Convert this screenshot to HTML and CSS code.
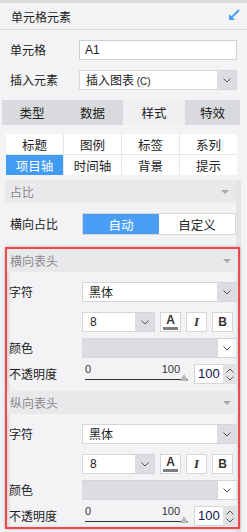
FILE: index.html
```html
<!DOCTYPE html>
<html lang="zh-CN">

<head>
  <meta charset="UTF-8">
  <meta name="viewport" content="width=device-width, initial-scale=1.0">
  <title>单元格元素</title>
  <link rel="stylesheet" href="styles.css">
</head>

<body>
  <div class="panel">
    <div class="topbar"></div>
    <div class="title">
      <span>单元格元素</span>
      <svg class="collapse" width="12" height="12" viewBox="0 0 12 12">
        <line x1="11" y1="1" x2="3" y2="9" stroke="#4a9ff5" stroke-width="2" />
        <polygon points="1,5 1,11 7,11" fill="#4a9ff5" />
      </svg>
    </div>

    <div class="form-top">
      <div class="row">
        <span class="label">单元格</span>
        <div class="field">A1</div>
      </div>
      <div class="row">
        <span class="label">插入元素</span>
        <div class="select">
          <span class="value">插入图表 <small>(C)</small></span>
          <span class="caret">
            <svg width="8" height="5" viewBox="0 0 8 5"><polyline points="0.5,0.5 4,4 7.5,0.5" fill="none" stroke="#555" /></svg>
          </span>
        </div>
      </div>
    </div>

    <div class="tabs">
      <div class="tab t1">类型</div>
      <div class="tab t2">数据</div>
      <div class="tab t3 active">样式</div>
      <div class="tab t4">特效</div>
    </div>

    <div class="subtabs">
      <div class="sub">标题</div>
      <div class="sub">图例</div>
      <div class="sub">标签</div>
      <div class="sub">系列</div>
      <div class="sub active">项目轴</div>
      <div class="sub">时间轴</div>
      <div class="sub">背景</div>
      <div class="sub">提示</div>
    </div>

    <div class="scroll">
      <div class="section">
        <div class="sec-head"><span>占比</span><i class="tri"></i></div>
        <div class="row gap-top">
          <span class="label">横向占比</span>
          <div class="toggle">
            <span class="opt on">自动</span>
            <span class="opt">自定义</span>
          </div>
        </div>
      </div>

      <div class="marked">
        <div class="section inner">
          <div class="sec-head"><span>横向表头</span><i class="tri"></i></div>
          <div class="row r-font">
            <span class="label">字符</span>
            <div class="select wide">
              <span class="value">黑体</span>
              <span class="caret">
                <svg width="8" height="5" viewBox="0 0 8 5"><polyline points="0.5,0.5 4,4 7.5,0.5" fill="none" stroke="#555" /></svg>
              </span>
            </div>
          </div>
          <div class="row r-size">
            <span class="label"></span>
            <div class="size-tools">
              <div class="select size">
                <span class="value num">8</span>
                <span class="caret">
                  <svg width="8" height="5" viewBox="0 0 8 5"><polyline points="0.5,0.5 4,4 7.5,0.5" fill="none" stroke="#555" /></svg>
                </span>
              </div>
              <div class="btn color-a"><b>A</b><i class="bar"></i></div>
              <div class="btn italic">I</div>
              <div class="btn bold">B</div>
            </div>
          </div>
          <div class="row r-small">
            <span class="label">颜色</span>
            <div class="color-pick">
              <span class="swatch"></span>
              <span class="caret white">
                <svg width="8" height="5" viewBox="0 0 8 5"><polyline points="0.5,0.5 4,4 7.5,0.5" fill="none" stroke="#555" /></svg>
              </span>
            </div>
          </div>
          <div class="row r-small">
            <span class="label">不透明度</span>
            <div class="opacity">
              <div class="slider">
                <span>0</span><span>100</span>
                <i class="thumb"></i>
              </div>
              <div class="number">100</div>
              <div class="spin">
                <svg width="8" height="5" viewBox="0 0 8 5"><polyline points="0.5,4.5 4,1 7.5,4.5" fill="none" stroke="#555" /></svg>
                <svg width="8" height="5" viewBox="0 0 8 5"><polyline points="0.5,0.5 4,4 7.5,0.5" fill="none" stroke="#555" /></svg>
              </div>
            </div>
          </div>
        </div>

        <div class="section inner">
          <div class="sec-head"><span>纵向表头</span><i class="tri"></i></div>
          <div class="row r-font">
            <span class="label">字符</span>
            <div class="select wide">
              <span class="value">黑体</span>
              <span class="caret">
                <svg width="8" height="5" viewBox="0 0 8 5"><polyline points="0.5,0.5 4,4 7.5,0.5" fill="none" stroke="#555" /></svg>
              </span>
            </div>
          </div>
          <div class="row r-size">
            <span class="label"></span>
            <div class="size-tools">
              <div class="select size">
                <span class="value num">8</span>
                <span class="caret">
                  <svg width="8" height="5" viewBox="0 0 8 5"><polyline points="0.5,0.5 4,4 7.5,0.5" fill="none" stroke="#555" /></svg>
                </span>
              </div>
              <div class="btn color-a"><b>A</b><i class="bar"></i></div>
              <div class="btn italic">I</div>
              <div class="btn bold">B</div>
            </div>
          </div>
          <div class="row r-small">
            <span class="label">颜色</span>
            <div class="color-pick">
              <span class="swatch"></span>
              <span class="caret white">
                <svg width="8" height="5" viewBox="0 0 8 5"><polyline points="0.5,0.5 4,4 7.5,0.5" fill="none" stroke="#555" /></svg>
              </span>
            </div>
          </div>
          <div class="row r-small">
            <span class="label">不透明度</span>
            <div class="opacity">
              <div class="slider">
                <span>0</span><span>100</span>
                <i class="thumb"></i>
              </div>
              <div class="number">100</div>
              <div class="spin">
                <svg width="8" height="5" viewBox="0 0 8 5"><polyline points="0.5,4.5 4,1 7.5,4.5" fill="none" stroke="#555" /></svg>
                <svg width="8" height="5" viewBox="0 0 8 5"><polyline points="0.5,0.5 4,4 7.5,0.5" fill="none" stroke="#555" /></svg>
              </div>
            </div>
          </div>
        </div>
      </div>
    </div>
  </div>
</body>

</html>
```

FILE: styles.css
```css
* {
  box-sizing: border-box;
}

body {
  margin: 0;
  background: #f3f3f5;
  font-family: "Noto Sans CJK SC", "Liberation Sans", sans-serif;
  font-size: 12px;
  color: #222;
}

.panel {
  width: 247px;
  height: 532px;
  overflow: hidden;
}

.topbar {
  height: 3px;
  background: #dcdcdf;
}

.title {
  height: 27px;
  border-bottom: 1px solid #d9d9dc;
  display: flex;
  align-items: center;
  justify-content: space-between;
  padding: 0 7px 0 11px;
}

.collapse {
  margin-top: -2px;
}

/* top form */
.form-top {
  padding: 10px 10px 0 10px;
  display: flex;
  flex-direction: column;
  gap: 10px;
}

.row {
  display: flex;
  align-items: center;
  height: 20px;
}

.label {
  width: 69px;
  flex: none;
  line-height: 20px;
}

.field {
  width: 158px;
  height: 20px;
  background: #fff;
  border: 1px solid #d0d0d4;
  padding-left: 5px;
  line-height: 18px;
  font-family: "Liberation Sans", sans-serif;
}

.select {
  width: 158px;
  height: 20px;
  background: #fff;
  border: 1px solid #d6d6da;
  display: flex;
  align-items: stretch;
}

.select .value {
  flex: 1;
  padding-left: 6px;
  line-height: 18px;
}

.select small {
  font-family: "Liberation Sans", sans-serif;
  font-size: 10px;
}

.caret {
  width: 19px;
  background: #dcdde0;
  display: flex;
  align-items: center;
  justify-content: center;
}

.caret.white {
  background: #fff;
  border-left: 1px solid #d6d6da;
}

/* main tabs */
.tabs {
  margin-top: 10px;
  padding-left: 2px;
  display: flex;
  height: 25px;
}

.tab {
  background: #d9dadd;
  display: flex;
  align-items: center;
  justify-content: center;
  font-size: 12.5px;
}

.t1 { width: 60px; }
.t2 { width: 61px; }
.t3 { width: 62px; }
.t4 { width: 55px; }

.tab.active {
  background: #f0f0f3;
}

/* sub tabs */
.subtabs {
  margin: 9px 10px 0 6px;
  display: grid;
  grid-template-columns: repeat(4, 1fr);
  grid-auto-rows: 20px;
  gap: 1px;
  background: #e6e6e9;
  font-size: 12.5px;
}

.sub {
  background: #fff;
  display: flex;
  align-items: center;
  justify-content: center;
}

.sub.active {
  background: #409cf6;
  color: #fff;
}

/* scroll area */
.scroll {
  margin-top: 5px;
  margin-left: 5px;
  width: 236px;
  height: 352px;
  background: linear-gradient(to right, transparent 231px, #e4e4e7 231px 236px);
  border-top-right-radius: 3px;
}

.section {
  width: 231px;
}

.sec-head {
  height: 23px;
  background: #e9e9eb;
  display: flex;
  align-items: center;
  justify-content: space-between;
  padding: 0 7px 0 5px;
  color: #8a8a8e;
}

.tri {
  width: 0;
  height: 0;
  border-left: 4px solid transparent;
  border-right: 4px solid transparent;
  border-top: 4px solid #a8a8ac;
}

.section .label {
  width: 77px;
  padding-left: 5px;
}

.gap-top {
  margin-top: 10px;
  height: 22px;
}

.toggle {
  width: 155px;
  height: 22px;
  display: flex;
  border: 1px solid #d6d6da;
  background: #fff;
}

.opt {
  flex: 1;
  display: flex;
  align-items: center;
  justify-content: center;
  font-size: 12.5px;
}

.opt.on {
  background: #4a9ef6;
  color: #fff;
}

/* highlighted block */
.marked {
  margin-top: 12px;
  width: 235px;
  border: 2px solid #f0474b;
  box-shadow: 0 0 3px rgba(0, 0, 0, 0.25), inset 2px 0 3px rgba(0, 0, 0, 0.12);
  padding-bottom: 1px;
}

.section.inner {
  width: 231px;
  padding-bottom: 7px;
}

.section.inner:last-child {
  padding-bottom: 0;
}

.section.inner .label {
  width: 75px;
  padding-left: 2px;
}

.section.inner .sec-head {
  padding-left: 3px;
}

.r-font {
  margin-top: 10px;
}

.r-size {
  margin-top: 10px;
}

.r-small {
  margin-top: 6px;
}

.select.wide {
  width: 155px;
}

.size-tools {
  display: flex;
  align-items: center;
}

.select.size {
  width: 73px;
}

.num {
  font-family: "Liberation Sans", sans-serif;
  padding-left: 7px !important;
}

.btn {
  width: 21px;
  height: 20px;
  margin-left: 5px;
  background: #fff;
  border: 1px solid #d6d6da;
  display: flex;
  flex-direction: column;
  align-items: center;
  justify-content: center;
  font-family: "Liberation Sans", sans-serif;
  color: #333;
}

.color-a b {
  font-size: 12px;
  line-height: 11px;
}

.color-a .bar {
  width: 15px;
  height: 3px;
  margin-top: 1px;
  background: #7d7d80;
}

.btn.italic {
  font-family: "Liberation Serif", serif;
  font-style: italic;
  font-weight: bold;
  font-size: 13px;
}

.btn.bold {
  font-weight: bold;
  font-size: 12px;
}

.color-pick {
  width: 155px;
  height: 20px;
  display: flex;
  border: 1px solid #d6d6da;
  border-left: none;
}

.swatch {
  flex: 1;
  background: #dcdde2;
}

.opacity {
  width: 155px;
  height: 20px;
  display: flex;
  align-items: stretch;
}

.slider {
  position: relative;
  width: 103px;
  margin-left: 3px;
  display: flex;
  justify-content: space-between;
  align-items: flex-start;
  border-bottom: 1px solid #333;
  height: 16px;
  padding-right: 8px;
  font-family: "Liberation Sans", sans-serif;
  font-size: 11px;
  line-height: 11px;
  color: #333;
}

.thumb {
  position: absolute;
  right: 0;
  bottom: -2px;
  width: 0;
  height: 0;
  border-left: 4px solid transparent;
  border-right: 4px solid transparent;
  border-bottom: 7px solid #b8b8bc;
}

.number {
  width: 29px;
  margin-left: 6px;
  background: #fff;
  border: 1px solid #d6d6da;
  border-right: none;
  font-family: "Liberation Sans", sans-serif;
  font-size: 13px;
  line-height: 18px;
  padding-left: 3px;
  color: #141450;
}

.spin {
  width: 14px;
  background: #e1e1e4;
  display: flex;
  flex-direction: column;
  align-items: center;
  justify-content: center;
  gap: 3px;
}
```
